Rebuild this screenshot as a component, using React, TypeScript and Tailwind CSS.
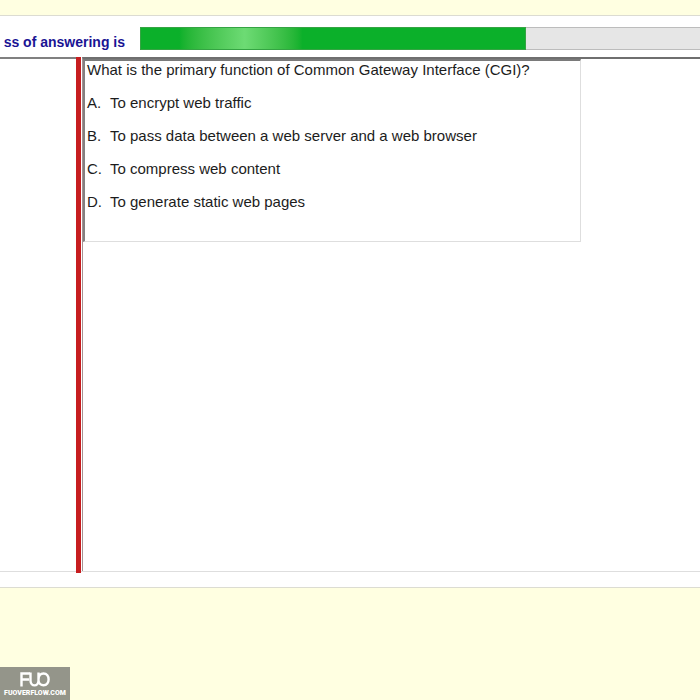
const options = [
  { letter: "A.", text: "To encrypt web traffic" },
  { letter: "B.", text: "To pass data between a web server and a web browser" },
  { letter: "C.", text: "To compress web content" },
  { letter: "D.", text: "To generate static web pages" },
];

function ProgressHeader() {
  return (
    <header className="flex h-[41px] items-start overflow-hidden">
      <div className="flex w-[125px] shrink-0 justify-end overflow-hidden pt-[18px] text-[14px] leading-[17px] font-bold whitespace-nowrap text-[#1a1494]">
        <span id="progress-label">ss of answering is</span>
      </div>
      <div
        role="progressbar"
        aria-labelledby="progress-label"
        aria-valuenow={69}
        className="mt-[11px] ml-[15px] flex h-[23px] grow border-y border-[#bcbcbc] bg-[#e6e6e6]"
      >
        <div className="-my-px w-[69%] border border-[#35a443] bg-linear-to-r from-[#0bb02a] from-10% via-[#6ddb74] via-27% to-[#0bb02a] to-42%" />
      </div>
    </header>
  );
}

function Question() {
  return (
    <section className="mr-[119px] h-[183px] grow border-t-2 border-r border-b border-l-2 border-t-[#7a7a7a] border-r-[#dedede] border-b-[#dedede] border-l-[#858080] pl-[2px] text-[15px] leading-[17px] text-[#1c1c1c]">
      <p>What is the primary function of Common Gateway Interface (CGI)?</p>
      <ol>
        {options.map((option) => (
          <li key={option.letter} className="mt-4 flex">
            <span className="w-[23px] shrink-0">{option.letter}</span>
            <span>{option.text}</span>
          </li>
        ))}
      </ol>
    </section>
  );
}

function Watermark() {
  return (
    <div className="fixed bottom-0 left-0 flex h-[33px] w-[70px] flex-col items-center bg-[#94958a] pt-[5px] text-white">
      <svg width="30" height="15" viewBox="0 0 30 15" fill="none" stroke="currentColor" strokeWidth="2.4" aria-label="FUO">
        <path d="M1.500 14.500V1.500H10M2 7.500H9" />
        <path d="M10.500 0.500V8.500C10.500 15 18.500 15 18.500 8.500V7.500C18.500 3.500 20.500 1.500 23.500 1.500C30.300 1.500 30.300 13.300 23.500 13.300C21 13.300 18.500 11.500 18.500 8V0.500" />
      </svg>
      <span className="mt-[2px] font-[Roboto,sans-serif] text-[7px] leading-[9px] font-black whitespace-nowrap">
        FUOVERFLOW.COM
      </span>
    </div>
  );
}

export default function App() {
  return (
    <div className="min-h-screen overflow-hidden bg-[#ffffe1] pt-[15px] font-['Liberation_Sans',Arial,sans-serif]">
      <div className="border-y border-[#dcdcd2] bg-white pb-[15px]">
        <ProgressHeader />
        <main className="flex h-[515px] border-b border-[#dedede]">
          <aside className="w-[76px] shrink-0 border-t-2 border-[#808080]" />
          <div className="-mb-[2px] w-[5px] shrink-0 bg-[#c71d1f]" />
          <div className="ml-px flex grow items-start border-t-2 border-l border-t-[#6f6f6f] border-l-[#a79292]">
            <Question />
          </div>
        </main>
      </div>
      <Watermark />
    </div>
  );
}
